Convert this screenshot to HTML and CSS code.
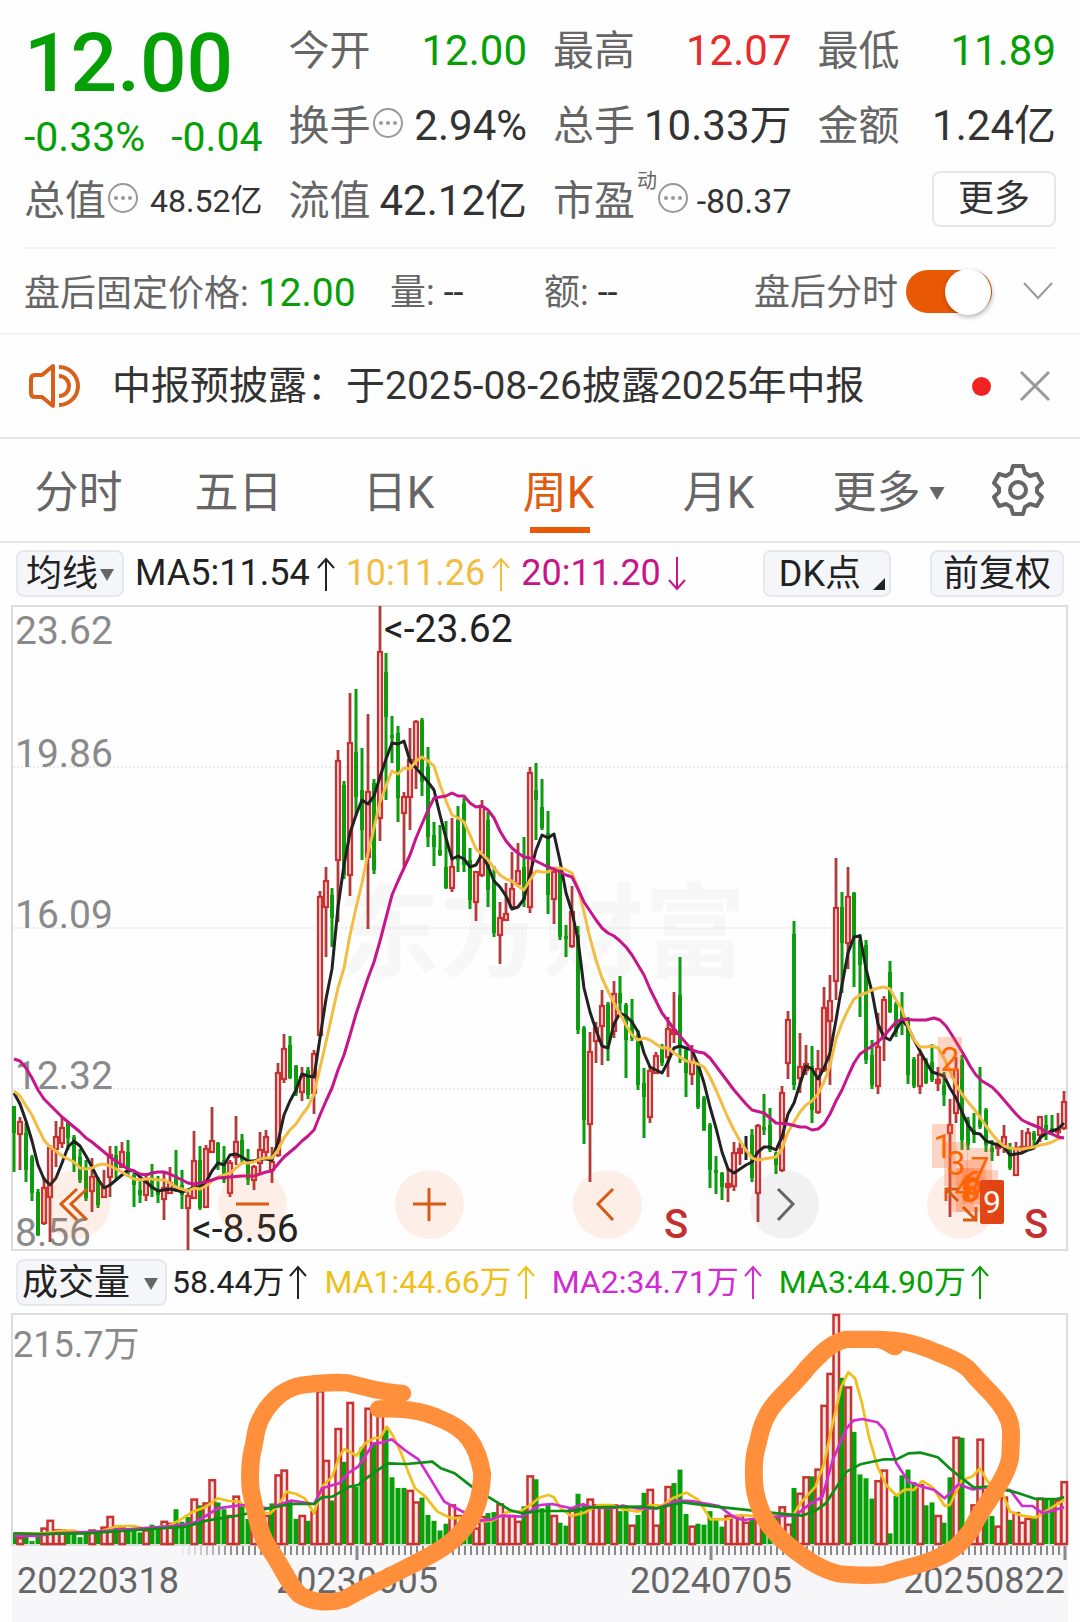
FILE: index.html
```html
<!DOCTYPE html>
<html lang="zh-CN">
<head>
<meta charset="utf-8">
<meta name="viewport" content="width=device-width, initial-scale=1">
<title>周K行情</title>
<link rel="stylesheet" href="styles.css">
</head>
<body>
<svg class="defs" aria-hidden="true">
  <symbol id="info" viewBox="0 0 32 32"><circle cx="16" cy="16" r="14" fill="none" stroke="#999" stroke-width="2"/><circle cx="9" cy="16" r="2" fill="#999"/><circle cx="16" cy="16" r="2" fill="#999"/><circle cx="23" cy="16" r="2" fill="#999"/></symbol>
  <symbol id="up" viewBox="0 0 18 34"><path d="M9 34V3M1 11L9 2L17 11" fill="none" stroke="currentColor" stroke-width="2"/></symbol>
  <symbol id="down" viewBox="0 0 18 34"><path d="M9 0V31M1 23L9 32L17 23" fill="none" stroke="currentColor" stroke-width="2"/></symbol>
  <symbol id="tri" viewBox="0 0 14 12"><path d="M0 0H14L7 12Z" fill="#666"/></symbol>
</svg>

<main>
  <section class="quote">
    <div class="price-box">
      <div class="price">12.00</div>
      <div class="change"><span>-0.33%</span><span>-0.04</span></div>
    </div>
    <div class="cell"><span>今开</span><b class="green">12.00</b></div>
    <div class="cell"><span>最高</span><b class="red">12.07</b></div>
    <div class="cell"><span>最低</span><b class="green">11.89</b></div>
    <div class="cell"><span>换手</span><svg class="info"><use href="#info"/></svg><b>2.94%</b></div>
    <div class="cell"><span>总手</span><b>10.33万</b></div>
    <div class="cell"><span>金额</span><b>1.24亿</b></div>
    <div class="cell"><span>总值</span><svg class="info"><use href="#info"/></svg><b class="small">48.52亿</b></div>
    <div class="cell"><span>流值</span><b>42.12亿</b></div>
    <div class="cell"><span>市盈</span><sup>动</sup><svg class="info"><use href="#info"/></svg><b class="mid">-80.37</b></div>
    <div class="cell"><button class="more" type="button">更多</button></div>
  </section>

  <section class="after">
    <span class="after-price">盘后固定价格: <b class="green">12.00</b></span>
    <span class="after-vol">量: <b>--</b></span>
    <span class="after-amt">额: <b>--</b></span>
    <label class="after-switch" for="after-toggle">盘后分时</label>
    <input class="toggle" id="after-toggle" type="checkbox" role="switch" checked>
    <button class="icon-btn" type="button" aria-label="展开"><svg width="32" height="20" viewBox="0 0 32 20"><path d="M2 2L16 17L30 2" fill="none" stroke="#999" stroke-width="2"/></svg></button>
  </section>

  <section class="news">
    <svg class="speaker" width="52" height="46" viewBox="0 0 52 46" fill="none" stroke="#d9601a" stroke-width="4" stroke-linejoin="round"><path d="M24 3V43L13 34H6Q2 34 2 30V16Q2 12 6 12H13Z"/><path d="M30 13A10 10 0 0 1 30 33"/><path d="M30 4A19 19 0 0 1 30 42"/></svg>
    <a class="news-text" href="#news">中报预披露：于2025-08-26披露2025年中报</a>
    <i class="dot"></i>
    <button class="icon-btn" type="button" aria-label="关闭"><svg width="32" height="32" viewBox="0 0 32 32"><path d="M2 2L30 30M30 2L2 30" stroke="#999" stroke-width="3"/></svg></button>
  </section>

  <nav class="tabs">
    <button type="button">分时</button>
    <button type="button">五日</button>
    <button type="button">日K</button>
    <button class="active" type="button">周K</button>
    <button type="button">月K</button>
    <button class="wide" type="button">更多<svg width="16" height="13"><use href="#tri"/></svg></button>
    <button class="gear" type="button" aria-label="设置"><svg width="52" height="54" viewBox="0 0 52 54" fill="none" stroke="#666" stroke-width="4" stroke-linejoin="round"><path d="M21 3H31L33 10L38 13L45 11L50 20L45 25V29L50 34L45 43L38 41L33 44L31 51H21L19 44L14 41L7 43L2 34L7 29V25L2 20L7 11L14 13L19 10Z"/><circle cx="26" cy="27" r="8"/></svg></button>
  </nav>

  <div class="legend">
    <button class="chip" type="button">均线<svg width="14" height="12"><use href="#tri"/></svg></button>
    <span class="ma ink">MA5:11.54<svg class="arrow"><use href="#up"/></svg></span>
    <span class="ma gold">10:11.26<svg class="arrow"><use href="#up"/></svg></span>
    <span class="ma pink">20:11.20<svg class="arrow"><use href="#down"/></svg></span>
    <button class="chip dk" type="button">DK点<svg width="12" height="12" viewBox="0 0 12 12"><path d="M12 0V12H0Z" fill="#222"/></svg></button>
    <button class="chip adjust" type="button">前复权</button>
  </div>

  <div class="kchart">
    <svg class="plot" viewBox="0 604 1080 648" role="img" aria-label="周K线图">
      <text class="watermark" x="338" y="969">东方财富</text>
      <path class="grid" d="M13 767H1067M13 928H1067M13 1089H1067"/>
      <rect class="frame" x="12" y="606" width="1055" height="644"/>
      <g class="axis-label"><text x="15" y="644">23.62</text><text x="15" y="767">19.86</text><text x="15" y="928">16.09</text><text x="15" y="1089">12.32</text><text x="15" y="1246">8.56</text></g>
      <g id="candles"></g>
      <g class="line">
        <polyline stroke="#222" points="14,1093 20,1104 26,1121 32,1141 38,1165 44,1179 50,1185 56,1178 62,1163 68,1147 74,1141 80,1146 86,1156 92,1167 98,1179 104,1188 110,1185 116,1180 122,1175 128,1170 134,1171 140,1177 146,1182 152,1187 158,1191 164,1190 170,1189 176,1190 182,1192 188,1190 194,1187 200,1187 206,1182 212,1171 218,1163 224,1165 230,1155 236,1154 242,1157 248,1161 254,1161 260,1159 266,1159 272,1160 278,1142 284,1115 290,1101 296,1090 302,1074 308,1076 314,1077 320,1038 326,999 332,969 338,907 344,865 350,833 356,815 362,800 368,804 374,796 380,777 386,759 392,743 398,744 404,741 410,761 416,768 422,775 428,782 434,790 440,815 446,838 452,859 458,856 464,859 470,867 476,865 482,854 488,866 494,881 500,887 506,896 512,909 518,907 524,899 530,874 536,850 542,835 548,838 554,834 560,861 566,893 572,912 578,940 584,988 590,1012 596,1030 602,1046 608,1048 614,1024 620,1013 626,1016 632,1022 638,1032 644,1053 650,1067 656,1070 662,1073 668,1062 674,1048 680,1046 686,1048 692,1050 698,1064 704,1083 710,1107 716,1128 722,1152 728,1169 734,1173 740,1169 746,1165 752,1162 758,1152 764,1147 770,1147 776,1150 782,1137 788,1114 794,1103 800,1084 806,1066 812,1069 818,1079 824,1068 830,1053 836,1020 842,985 848,953 854,937 860,936 866,969 872,992 878,1024 884,1037 890,1040 896,1030 902,1020 908,1027 914,1040 920,1051 926,1062 932,1072 938,1074 944,1076 950,1088 956,1098 962,1112 968,1125 974,1133 980,1134 986,1141 992,1143 998,1145 1004,1147 1010,1155 1016,1154 1022,1153 1028,1150 1034,1148 1040,1138 1046,1133 1052,1131 1058,1129 1064,1123"/>
        <polyline stroke="#f2bd42" points="14,1091 20,1096 26,1106 32,1115 38,1128 44,1140 50,1147 56,1151 62,1156 68,1159 74,1162 80,1168 86,1169 92,1168 98,1165 104,1164 110,1166 116,1169 122,1172 128,1176 134,1179 140,1180 146,1179 152,1179 158,1180 164,1180 170,1183 176,1187 182,1189 188,1191 194,1188 200,1189 206,1186 212,1181 218,1177 224,1175 230,1173 236,1168 242,1163 248,1163 254,1162 260,1159 266,1158 272,1158 278,1150 284,1138 290,1130 296,1124 302,1115 308,1107 314,1094 320,1068 326,1042 332,1015 338,988 344,968 350,935 356,908 362,883 368,853 374,828 380,802 386,786 392,771 398,774 404,768 410,769 416,761 422,757 428,761 434,766 440,785 446,801 452,815 458,818 464,822 470,835 476,849 482,854 488,860 494,868 500,875 506,879 512,881 518,886 524,890 530,880 536,871 542,872 548,872 554,868 560,868 566,870 572,873 578,888 584,912 590,938 596,960 602,978 608,991 614,1003 620,1014 626,1025 632,1035 638,1040 644,1038 650,1040 656,1044 662,1048 668,1048 674,1053 680,1057 686,1061 692,1062 698,1064 704,1067 710,1077 716,1090 722,1104 728,1118 734,1130 740,1141 746,1150 752,1158 758,1160 764,1159 770,1158 776,1157 782,1149 788,1132 794,1122 800,1112 806,1105 812,1101 818,1094 824,1082 830,1066 836,1039 842,1023 848,1010 854,999 860,995 866,993 872,990 878,988 884,987 890,989 896,1000 902,1010 908,1026 914,1040 920,1047 926,1047 932,1046 938,1048 944,1058 950,1071 956,1085 962,1094 968,1102 974,1109 980,1117 986,1126 992,1134 998,1141 1004,1146 1010,1148 1016,1149 1022,1149 1028,1148 1034,1147 1040,1145 1046,1144 1052,1142 1058,1139 1064,1137"/>
        <polyline stroke="#c7158a" points="14,1059 20,1061 26,1068 32,1078 38,1090 44,1099 50,1105 56,1111 62,1117 68,1122 74,1127 80,1132 86,1138 92,1142 98,1147 104,1152 110,1157 116,1161 122,1165 128,1169 134,1171 140,1174 146,1175 152,1173 158,1172 164,1172 170,1174 176,1177 182,1180 188,1183 194,1184 200,1183 206,1182 212,1180 218,1178 230,1177 242,1176 254,1176 260,1174 266,1172 272,1171 278,1164 284,1157 290,1152 296,1147 302,1141 308,1136 314,1130 320,1115 326,1101 332,1088 338,1070 344,1055 350,1035 356,1014 362,996 368,978 374,962 380,941 386,918 392,895 398,881 404,868 410,855 416,838 422,824 428,810 434,798 440,797 446,796 452,793 458,796 464,796 470,803 476,807 482,806 488,810 494,818 500,831 506,841 512,848 518,853 524,857 530,858 536,861 542,864 548,867 554,869 560,872 566,875 572,877 578,889 584,902 590,911 596,920 602,928 608,933 614,936 620,941 626,947 632,955 638,965 644,975 650,989 656,1001 662,1013 668,1021 674,1029 680,1036 686,1043 692,1050 698,1052 704,1053 710,1058 716,1066 722,1074 728,1082 734,1090 740,1097 746,1104 752,1110 764,1113 770,1118 776,1123 788,1124 800,1127 806,1127 812,1130 818,1129 824,1124 830,1114 836,1101 842,1090 848,1076 854,1063 860,1054 866,1050 872,1046 878,1042 884,1036 890,1029 896,1022 902,1019 914,1020 926,1020 934,1018 940,1020 946,1026 952,1035 958,1045 964,1055 970,1066 976,1075 982,1081 992,1087 998,1093 1004,1100 1010,1107 1016,1114 1022,1120 1028,1123 1040,1128 1046,1132 1052,1134 1058,1137 1064,1138"/>
      </g>
      <g class="callout"><text x="384" y="642">&lt;-23.62</text><text x="192" y="1242">&lt;-8.56</text></g>
      <g class="sell"><text x="676" y="1238">S</text><text x="1036" y="1238">S</text></g>
      <g class="mark-bg"><rect x="938" y="1037" width="24" height="42"/><rect x="932" y="1124" width="24" height="44"/><rect x="944" y="1142" width="24" height="44"/><rect x="967" y="1148" width="25" height="44"/><rect x="950" y="1168" width="24" height="44"/><rect x="956" y="1168" width="24" height="44"/><rect x="962" y="1160" width="24" height="44"/><rect x="974" y="1170" width="24" height="30"/></g>
      <g class="mark"><text x="950" y="1071">2</text><text x="943" y="1158">1</text><text x="956" y="1175">3</text><text x="980" y="1181">7</text><text x="973" y="1195">6</text><text x="964" y="1199">4</text><text x="969" y="1202">5</text><text x="971" y="1201">8</text></g>
      <rect x="980" y="1180" width="24" height="44" rx="2" fill="#e04413"/>
      <text class="mark-now" x="992" y="1213">9</text>
    </svg>
    <div class="controls">
      <button type="button" aria-label="最早"><svg viewBox="0 0 69 69"><path d="M36 19L20 34L36 50M46 19L30 34L46 50"/></svg></button>
      <button type="button" aria-label="缩小"><svg viewBox="0 0 69 69"><path d="M18 34H51"/></svg></button>
      <button type="button" aria-label="放大"><svg viewBox="0 0 69 69"><path d="M18 34H51M34 18V51"/></svg></button>
      <button type="button" aria-label="左移"><svg viewBox="0 0 69 69"><path d="M40 19L25 34L40 50"/></svg></button>
      <button class="off" type="button" aria-label="右移"><svg viewBox="0 0 69 69"><path d="M28 19L43 34L28 50"/></svg></button>
      <button type="button" aria-label="全屏"><svg viewBox="0 0 69 69"><path d="M19 31V19H31M19 19L31 31M36 50H49V37M36 37L49 50"/></svg></button>
    </div>
  </div>

  <div class="legend volume">
    <button class="chip vol" type="button">成交量<svg width="14" height="12"><use href="#tri"/></svg></button>
    <span class="ma ink">58.44万<svg class="arrow"><use href="#up"/></svg></span>
    <span class="ma yellow">MA1:44.66万<svg class="arrow"><use href="#up"/></svg></span>
    <span class="ma purple">MA2:34.71万<svg class="arrow"><use href="#up"/></svg></span>
    <span class="ma green">MA3:44.90万<svg class="arrow"><use href="#up"/></svg></span>
  </div>

  <svg class="plot" viewBox="0 1313 1080 309" role="img" aria-label="成交量图">
    <rect x="12" y="1545" width="1056" height="77" fill="#f7f7fa"/>
    <path class="frame" d="M12 1545V1314H1067V1545Z"/>
    <text class="vol-max" x="13" y="1357">215.7万</text>
    <g id="volumes"></g>
    <g id="ticks"></g>
    <g class="vline" transform="translate(0 1250) scale(.3444 .3333)">
      <polyline stroke="#efc01a" points="41,850 130,850 180,842 215,842 240,850 290,845 340,828 390,828 420,836 490,828 530,805 560,785 595,772 632,745 665,753 695,755 730,785 785,790 810,765 832,725 860,732 885,745 912,790 935,710 965,680 985,620 1000,597 1035,617 1060,580 1085,565 1105,562 1123,530 1140,555 1165,610 1185,665 1205,715 1235,740 1270,785 1310,805 1340,803 1395,815 1430,812 1475,785 1510,785 1540,765 1568,742"/>
      <polyline stroke="#d12bd1" points="41,858 110,858 160,850 250,846 300,843 400,836 500,828 560,820 595,800 632,775 700,765 780,775 845,752 912,762 935,715 985,700 1010,670 1040,650 1085,580 1110,578 1137,568 1175,600 1215,628 1240,670 1290,755 1340,783 1395,812 1430,808 1455,797 1515,800 1568,765"/>
      <polyline stroke="#0b8f14" points="41,850 110,852 250,850 400,840 540,830 600,812 700,795 780,775 845,762 912,762 935,742 965,740 1015,710 1040,705 1070,680 1125,640 1180,642 1255,635 1280,655 1320,670 1370,710 1420,742 1480,780 1515,790 1568,783"/>
    </g>
    <g class="vline" transform="translate(540 1250) scale(.3444 .3333)">
      <polyline stroke="#efc01a" points="0,742 25,735 40,742 60,775 90,798 130,788 170,765 210,765 240,778 285,785 320,765 355,767 385,745 425,728 460,750 495,808 540,808 585,795 640,800 700,790 735,795 760,755 800,710 825,640 850,520 875,410 895,367 915,385 935,460 955,560 980,650 1005,705 1035,737 1060,718 1085,720 1110,693 1140,712 1175,768 1190,765 1225,690 1255,680 1277,655 1300,695 1345,735 1365,785 1400,797 1440,803 1475,780 1522,750"/>
      <polyline stroke="#d12bd1" points="0,765 35,762 90,775 125,763 150,772 210,775 240,767 280,775 340,775 400,752 440,753 520,768 560,800 590,810 700,798 740,798 780,765 820,740 850,630 890,535 910,512 935,507 980,517 1000,540 1035,640 1070,695 1110,710 1145,720 1175,745 1215,703 1255,718 1300,712 1365,720 1400,768 1430,768 1460,790 1522,772"/>
      <polyline stroke="#0b8f14" points="0,783 90,783 150,772 300,770 340,775 415,757 510,770 620,782 690,790 760,797 800,782 830,760 890,665 930,643 1000,628 1035,628 1070,610 1105,608 1155,622 1195,660 1260,713 1300,710 1375,725 1440,747 1500,747 1522,742"/>
    </g>
    <g class="dates"><text x="17" y="1593">20220318</text><text x="357" y="1593" text-anchor="middle">20230605</text><text x="711" y="1593" text-anchor="middle">20240705</text><text x="1065" y="1593" text-anchor="end">20250822</text></g>
    <g class="pen">
      <path transform="translate(0 1250) scale(.3444 .3333)" d="M1168 430C1100 427 1065 412 1010 399C970 395 920 400 880 405C820 415 795 450 775 475C740 530 745 545 736 590C725 630 722 700 732 740C745 800 755 860 785 900C820 950 835 1000 870 1035C910 1060 960 1060 1000 1048C1050 1020 1080 1000 1120 985C1200 940 1290 905 1335 850C1385 795 1398 735 1400 670C1385 580 1350 535 1280 507C1220 478 1160 475 1100 477"/>
      <path transform="translate(540 1250) scale(.3444 .3333)" d="M1030 290C1015 282 1000 268 975 268H890C845 278 815 310 775 355C735 410 680 450 660 495C635 540 640 560 627 600C618 640 620 700 626 730C640 800 670 840 720 885C780 935 820 960 870 972C930 978 970 976 1000 973C1050 955 1100 948 1150 925C1200 905 1230 875 1255 835C1285 765 1350 700 1365 625C1370 540 1370 520 1350 485C1320 430 1285 410 1255 370C1230 335 1180 320 1125 296C1080 278 1040 268 975 268"/>
    </g>
  </svg>
</main>
<script src="chart.js"></script>
</body>
</html>
```
FILE: styles.css
```css
* { box-sizing: border-box; }
body {
  margin: 0;
  background: #fefefe;
  color: #333;
  font-family: Roboto, "Noto Sans CJK SC", sans-serif;
  line-height: 1.2;
}
button {
  margin: 0;
  padding: 0;
  border: 0;
  background: none;
  color: inherit;
  font: inherit;
}
b { font-weight: 400; }
svg { flex: none; }
.defs { position: absolute; width: 0; height: 0; }
.green { color: #06a006; }
.red { color: #e82a2a; }
.ink { color: #222; }
.gold { color: #f2bd42; }
.pink { color: #c7158a; }
.yellow { color: #efc01a; }
.purple { color: #d12bd1; }

.quote {
  display: grid;
  grid-template-columns: repeat(4, 1fr);
  grid-auto-rows: 75px;
  column-gap: 26px;
  margin: 0 24px;
  padding: 13px 0 9px;
  border-bottom: 2px solid #f2f2f2;
}
.price-box {
  grid-row: span 2;
  padding-top: 8px;
  color: #06a006;
}
.price {
  font-size: 82px;
  font-weight: 500;
  line-height: 84px;
}
.change {
  display: flex;
  justify-content: space-between;
  margin-top: 7px;
  font-size: 41px;
  line-height: 50px;
}
.cell {
  display: flex;
  align-items: center;
  color: #666;
  font-size: 41px;
  line-height: 48px;
  white-space: nowrap;
}
.cell b {
  margin-left: auto;
  color: #333;
  font-size: 42px;
}
.cell .green { color: #06a006; }
.cell .red { color: #e82a2a; }
.cell b.small { font-size: 32px; }
.cell b.mid { font-size: 34px; }
.cell sup {
  align-self: flex-start;
  margin: 6px 2px 0;
  font-size: 20px;
  line-height: 24px;
}
.info {
  width: 32px;
  height: 32px;
  margin: 0 0 6px 1px;
}
sup + .info { margin-left: -2px; }
.more {
  width: 124px;
  height: 56px;
  margin: 0 0 4px auto;
  border: 2px solid #e6e6e6;
  border-radius: 8px;
  color: #333;
  font-size: 36px;
}

.after {
  display: flex;
  align-items: center;
  height: 86px;
  padding: 0 26px 0 24px;
  border-bottom: 2px solid #f2f2f2;
  color: #666;
  font-size: 36px;
  white-space: nowrap;
}
.after span, .after label { padding-top: 5px; }
.after b { color: #333; }
.after .green { color: #06a006; font-size: 39px; }
.after-price { flex: 366; }
.after-vol { flex: 154; }
.after-amt { flex: 210; }
.after-switch { margin-right: 8px; }
.toggle {
  appearance: none;
  width: 86px;
  height: 43px;
  margin: 0 30px 0 0;
  border-radius: 22px;
  background: #e85805;
}
.toggle::before {
  content: "";
  display: block;
  width: 46px;
  height: 46px;
  margin: -1px 0 0 39px;
  border-radius: 50%;
  background: #fff;
  box-shadow: 1px 2px 5px rgba(0, 0, 0, .3);
}
.icon-btn { display: flex; }

.news {
  display: flex;
  align-items: center;
  height: 104px;
  padding: 0 29px;
  border-bottom: 2px solid #e6e8e8;
}
.news-text {
  flex: 1;
  margin-left: 31px;
  color: #333;
  font-size: 39px;
  text-decoration: none;
  white-space: nowrap;
}
.dot {
  width: 19px;
  height: 19px;
  margin-right: 28px;
  border-radius: 50%;
  background: #f02222;
}

.tabs {
  display: grid;
  grid-template-columns: 8fr 8fr 8fr 8fr 8fr 9fr 5fr;
  height: 104px;
  border-bottom: 2px solid #e6e8e8;
  color: #666;
  font-size: 44px;
}
.tabs button {
  display: flex;
  align-items: center;
  justify-content: center;
  padding: 7px 3px 0 0;
}
.tabs .wide { gap: 8px; }
.tabs .gear { padding: 0 24px 0 0; }
.tabs .active {
  color: #e05a10;
  background: linear-gradient(#e85805, #e85805) center 88px / 60px 6px no-repeat;
}

.legend {
  display: flex;
  align-items: center;
  gap: 11px;
  height: 61px;
  padding: 0 16px;
  font-size: 36px;
  white-space: nowrap;
}
.ma { display: flex; align-items: center; }
.arrow {
  width: 18px;
  height: 34px;
  margin-left: 7px;
}
.chip {
  display: flex;
  align-items: center;
  justify-content: center;
  gap: 2px;
  height: 47px;
  padding: 3px 8px 0;
  border: 2px solid #e6e8ee;
  border-radius: 8px;
  background: #f5f6f9;
  color: #222;
}
.dk {
  gap: 12px;
  margin-left: auto;
  padding: 3px 4px 0 14px;
}
.dk svg { align-self: flex-end; margin-bottom: 5px; }
.adjust { margin-left: 28px; padding: 3px 11px 0; }
.volume { gap: 17px; font-size: 32px; }
.volume .chip {
  gap: 14px;
  margin-right: -12px;
  padding: 3px 7px 0 4px;
  font-size: 36px;
}
.volume .arrow { margin-left: 5px; }

.plot {
  display: block;
  width: 100%;
  height: auto;
}
.frame { fill: none; stroke: #ddd; stroke-width: 2; }
.grid { stroke: #d8d8d8; stroke-width: 1; stroke-dasharray: 2 2; }
.watermark {
  fill: #f7f7f8;
  font-size: 102px;
  font-weight: 700;
}
.axis-label { fill: #8a8a8a; font-size: 39px; }
.callout { fill: #222; font-size: 39px; }
.sell {
  fill: #c43030;
  font-size: 40px;
  font-weight: 500;
  text-anchor: middle;
}
.line polyline {
  fill: none;
  stroke-width: 3;
  stroke-linejoin: round;
}
.mark-bg { fill: #ff6a30; fill-opacity: .28; }
.mark { fill: #ff6500; font-size: 34px; text-anchor: middle; }
.mark-now { fill: #fff; font-size: 32px; text-anchor: middle; }
.vline polyline {
  fill: none;
  stroke-width: 8;
  stroke-linejoin: round;
}
.vol-max { fill: #8a8a8a; font-size: 36px; }
.dates { fill: #666; font-size: 36px; }
.pen path {
  fill: none;
  stroke: #ff8f3b;
  stroke-width: 52;
  stroke-linecap: round;
  stroke-linejoin: round;
}

.kchart { position: relative; }
.controls {
  position: absolute;
  right: 84px;
  bottom: 13px;
  left: 41px;
  display: flex;
  justify-content: space-between;
}
.controls button {
  width: 69px;
  height: 69px;
  border-radius: 50%;
  background: rgba(245, 100, 30, .1);
}
.controls svg {
  display: block;
  fill: none;
  stroke: #d95a12;
  stroke-width: 3;
}
.controls .off { background: rgba(90, 90, 90, .08); }
.controls .off svg { stroke: #666; }
```
FILE: chart.js
```js
// Each candle: colour, then high, low, body top and body bottom.
const candles = `g1106,1172,1106,1133 r1117,1170,1122,1134 g1123,1182,1133,1170 g1155,1201,1157,1193 g1189,1236,1192,1235
r1177,1225,1188,1223 r1145,1242,1148,1197 r1121,1167,1137,1149 r1117,1148,1128,1143 g1122,1150,1123,1138
g1135,1172,1137,1163 g1149,1183,1157,1180 g1160,1201,1167,1198 r1158,1212,1177,1191 g1177,1208,1180,1205
r1170,1198,1187,1197 r1146,1197,1155,1177 g1146,1180,1155,1170 r1142,1168,1152,1167 g1140,1177,1152,1173
g1173,1207,1175,1185 g1180,1203,1190,1195 r1173,1201,1180,1195 g1164,1197,1177,1190 g1176,1203,1190,1195
r1172,1220,1188,1199 r1167,1194,1183,1193 g1150,1192,1175,1190 g1170,1209,1185,1195 r1192,1250,1196,1208
r1131,1199,1161,1198 g1146,1210,1160,1208 r1145,1208,1149,1207 r1107,1153,1141,1152 g1142,1170,1143,1165
g1146,1183,1160,1180 r1160,1197,1163,1193 r1116,1165,1142,1157 g1134,1163,1140,1160 g1149,1185,1160,1180
r1165,1190,1167,1180 r1132,1173,1150,1163 r1130,1157,1137,1152 r1147,1183,1162,1170 r1063,1157,1073,1155
r1034,1083,1049,1079 g1036,1079,1045,1078 g1065,1096,1066,1094 r1067,1101,1077,1092 g1067,1099,1070,1095
r1050,1114,1054,1093 r891,1036,897,1035 r867,957,881,907 g888,947,895,918 r750,922,761,860
g781,879,785,875 r693,896,743,875 g689,815,752,797 g748,860,790,830 r714,929,792,857
g779,874,783,870 r606,841,652,818 g653,800,672,717 g716,763,735,738 g726,822,733,798
r792,867,797,813 r728,830,760,797 r720,789,722,767 g718,796,720,782 g747,847,767,837
g822,866,835,847 g825,856,850,855 g821,889,867,888 r818,892,867,888 g806,872,820,860
g798,872,803,865 g848,909,860,900 r871,921,872,902 r800,877,807,875 g812,907,820,890
g866,937,880,933 r902,964,918,935 r883,921,914,920 r852,909,889,907 r843,885,871,884
g837,907,867,900 r767,913,773,907 g763,840,790,800 g779,830,807,828 g811,914,833,895
r870,924,872,899 g868,940,873,937 g925,957,936,939 r886,948,912,946 g926,1034,935,1030
g1026,1144,1028,1120 r1032,1182,1052,1124 r1022,1063,1028,1041 r990,1065,1006,1026 g1002,1061,1004,1045
r981,1038,994,1031 g976,1013,993,1003 g1003,1078,1005,1040 g999,1041,1020,1038 g1030,1090,1035,1085
g1068,1138,1083,1097 r1067,1123,1071,1117 r1052,1073,1056,1073 g1044,1066,1047,1063 r1017,1077,1029,1057
r992,1043,1030,1034 g957,1063,995,1047 g1047,1097,1050,1073 r1045,1085,1062,1074 g1062,1109,1065,1107
g1096,1131,1098,1130 g1123,1188,1125,1170 g1156,1194,1170,1173 g1172,1200,1173,1187 r1168,1202,1184,1187
r1142,1191,1153,1186 r1143,1165,1149,1153 k1136,1160,1148,1149 g1129,1182,1135,1178 r1124,1222,1126,1193
g1094,1135,1127,1130 g1108,1152,1125,1150 g1152,1174,1153,1165 r1086,1172,1093,1170 r1011,1079,1020,1063
g921,1090,934,1085 r1033,1093,1067,1078 r1045,1075,1064,1070 g1046,1123,1066,1110 r1050,1114,1069,1112
r987,1072,1008,1070 r975,1085,1001,1021 r858,1000,908,981 g892,993,907,943 r867,969,897,943
g892,987,893,938 g934,1017,940,965 g940,1064,945,1060 g1040,1089,1055,1085 r1013,1094,1047,1086
r996,1061,1000,1037 g961,1013,972,1012 g1002,1037,1004,1033 g992,1035,1010,1020 g1017,1084,1020,1075
g1057,1088,1059,1086 r1052,1094,1055,1086 g1058,1084,1060,1083 g1044,1082,1062,1080 r1067,1091,1080,1083
g1072,1106,1085,1095 r1099,1217,1125,1133 r1057,1123,1070,1113 g1055,1150,1060,1140 g1117,1150,1120,1145
g1113,1143,1130,1135 g1067,1129,1120,1127 g1108,1152,1110,1145 g1140,1161,1148,1152 r1141,1156,1146,1148
r1125,1153,1137,1145 g1143,1170,1148,1168 r1142,1176,1148,1175 r1130,1152,1147,1149 r1128,1147,1133,1147
g1131,1147,1133,1140 r1116,1142,1117,1135 g1115,1140,1125,1130 g1115,1134,1128,1132 r1113,1137,1130,1132
r1091,1130,1102,1128`.split(/\s+/);

// Weekly volume; negative for a falling week.
const volumes = [-12,7,-11,-3,-8,17,25,15,15,-12,-11,-7,-11,15,-11,18,29,-17,17,-16,-15,-12,15,-20,-17,24,22,-36,-23,-28,
  47,-40,43,67,-43,-36,30,50,-39,-26,36,35,30,-42,72,77,-45,-26,30,-24,34,159,87,-45,120,-85,147,-59,-100,141,
  -104,141,-118,-69,-58,-58,56,44,-48,-30,-24,-14,-21,41,30,-15,-20,17,29,-32,-33,42,30,30,24,-39,71,-67,-37,-41,
  30,-22,-19,37,-52,-40,47,41,39,-39,41,-34,-39,20,-30,-53,57,20,-39,60,-63,-77,-31,19,-21,-20,-34,-27,-18,30,
  30,30,23,-27,25,-20,-28,-28,39,21,-58,53,70,-70,78,144,177,238,-172,163,-116,-72,-68,-47,66,77,-11,-50,-71,-77,
  -64,62,-40,-43,30,-22,-69,111,-110,-24,41,109,-30,-29,19,49,-25,33,23,27,-28,48,-47,-47,46,65];

const STEP = 6;
const LEFT = 14;
const BASE = 1544;
const VOLUME_SCALE = 230 / 238;

document.getElementById('candles').innerHTML = candles.map((c, i) => {
  const x = LEFT + i * STEP;
  const [hi, lo, top, bottom] = c.slice(1).split(',').map(Number);
  const h = bottom - top;
  if (c[0] === 'r') {
    return `<path d="M${x} ${hi}V${lo}" stroke="#b23c3c" stroke-width="2.8"/>` +
      `<rect x="${x - 2}" y="${top}" width="4" height="${h}" fill="${h > 4 ? '#f4d0d0' : '#cc3030'}" stroke="#cc3030" stroke-width="2.2"/>`;
  }
  const colour = c[0] === 'g' ? '#0c9c10' : '#222';
  return `<path d="M${x} ${hi}V${lo}" stroke="${colour}" stroke-width="3"/>` +
    `<rect x="${x - 2}" y="${top}" width="4" height="${h}" fill="${colour}"/>`;
}).join('');

document.getElementById('volumes').innerHTML = volumes.map((v, i) => {
  const x = LEFT + i * STEP;
  const h = Math.abs(v) * VOLUME_SCALE;
  return v > 0
    ? `<rect x="${x - 2.5}" y="${BASE - h + 1}" width="5.5" height="${h - 1}" fill="#fbe6e6" stroke="#c83232" stroke-width="2.5"/>`
    : `<rect x="${Math.max(x - 2.5, 13)}" y="${BASE - h}" width="5" height="${h}" fill="#08a008"/>`;
}).join('');

let ticks = '';
for (let i = 28; i < volumes.length; i++) {
  const major = i === 57 || i === 116 || i === 175;
  const x = LEFT + 1 + i * STEP;
  ticks += `<path d="M${x} 1546V${major ? 1560 : 1555}" stroke="#8a8a8a" stroke-width="${major ? 3 : 2}" opacity="${Math.min(1, (i - 27) / 10)}"/>`;
}
document.getElementById('ticks').innerHTML = ticks;
```
